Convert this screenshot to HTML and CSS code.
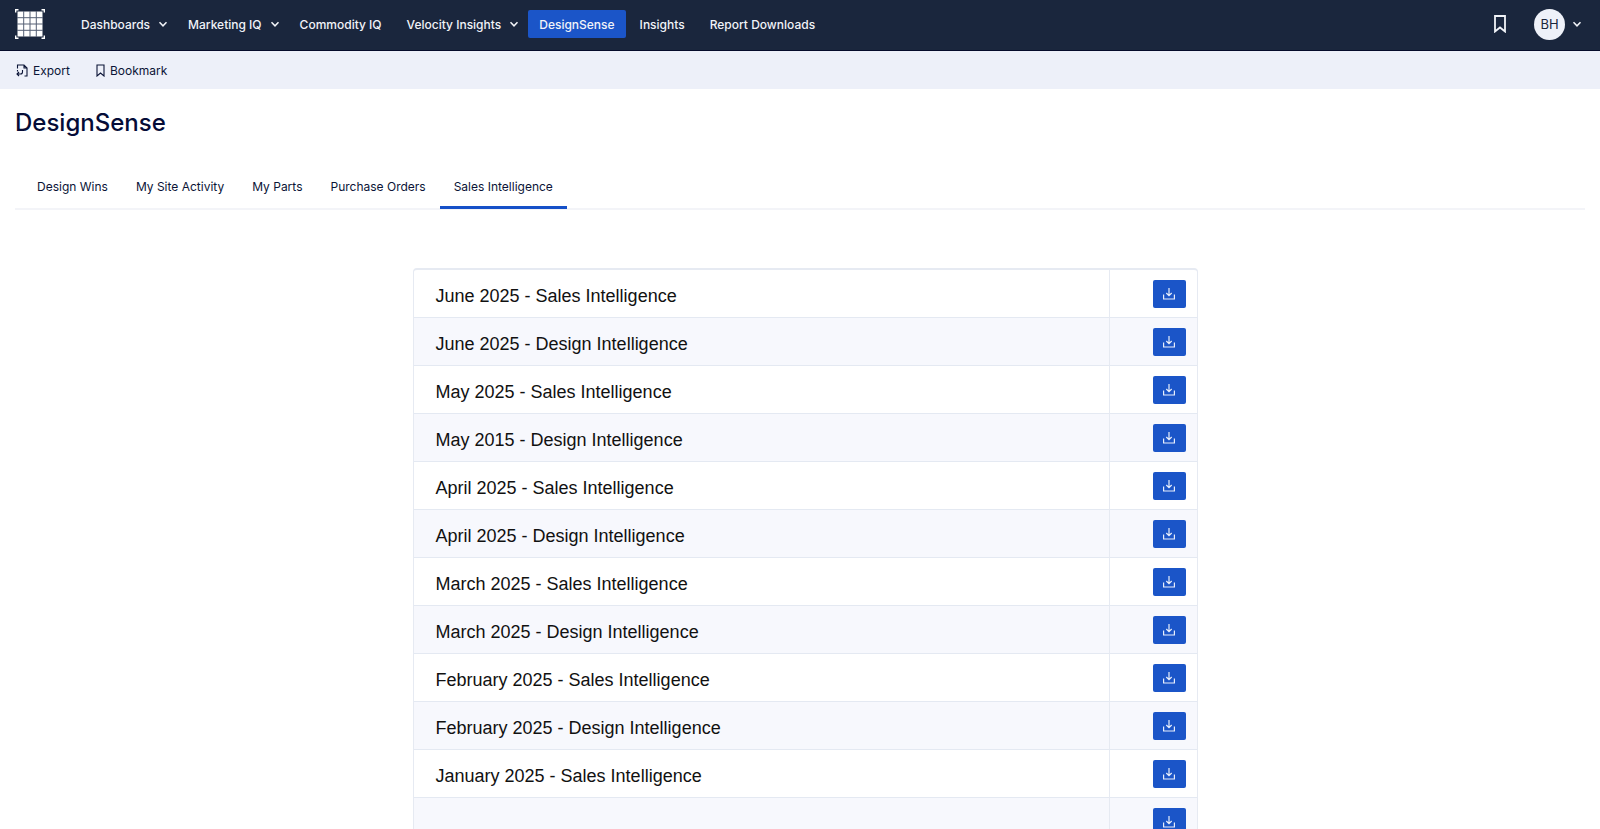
FILE: index.html
```html
<!DOCTYPE html>
<html lang="en">
<head>
<meta charset="utf-8">
<title>DesignSense</title>
<link rel="stylesheet" href="styles.css">
</head>
<body>
<svg class="sprite" aria-hidden="true">
  <symbol id="chevron" viewBox="0 0 10 10"><path d="M1.5 3.2 5 6.8 8.5 3.2" fill="none" stroke="currentColor" stroke-width="1.5"/></symbol>
  <symbol id="bookmark" viewBox="0 0 12 18"><path d="M1 1h10v15.5l-5-4-5 4z" fill="none" stroke="currentColor" stroke-width="1.8"/></symbol>
  <symbol id="download" viewBox="0 0 12 12"><path d="M6 0v7.500M3.300 5 6 7.600 8.700 5M.6 6.500v4.500h10.800V6.500" fill="none" stroke="currentColor" stroke-width="1.200"/></symbol>
</svg>
<header class="topbar">
  <a class="logo" href="#" aria-label="Home">
    <svg width="30" height="30" viewBox="0 0 30 30">
      <path d="M.7 3.500V.7h2.800M26.500.7h2.800v2.800M29.300 26.500v2.800h-2.800M3.500 29.300H.7v-2.800" fill="none" stroke="#fff" stroke-width="1.400"/>
      <path d="M2.500 2.500h25v25h-25z" fill="#fff"/>
      <path d="M8.700 2v26M15 2v26M21.300 2v26M2 8.700h26M2 15h26M2 21.300h26" stroke="#566075" stroke-width="1"/>
    </svg>
  </a>
  <nav class="nav">
    <button class="nav-item has-menu">Dashboards<svg class="chevron"><use href="#chevron"/></svg></button>
    <button class="nav-item has-menu">Marketing IQ<svg class="chevron"><use href="#chevron"/></svg></button>
    <a class="nav-item" href="#">Commodity IQ</a>
    <button class="nav-item has-menu">Velocity Insights<svg class="chevron"><use href="#chevron"/></svg></button>
    <a class="nav-item active" href="#">DesignSense</a>
    <a class="nav-item" href="#">Insights</a>
    <a class="nav-item" href="#">Report Downloads</a>
  </nav>
  <div class="account">
    <button class="plain" aria-label="Bookmarks"><svg class="saved"><use href="#bookmark"/></svg></button>
    <button class="plain user"><span class="avatar">BH</span><svg class="chevron"><use href="#chevron"/></svg></button>
  </div>
</header>
<div class="toolbar">
  <button class="tool"><svg width="12" height="13" viewBox="0 0 12 13" fill="none" stroke="currentColor" stroke-width="1.100"><path d="M1.500 4.500V1H8l3 3v8H8.500M8 1v3h3M1.500 6v1.500M6.500 6v2a2 2 0 0 1-2 2H1M3 8l-2 2 2 2"/></svg>Export</button>
  <button class="tool"><svg width="9" height="13" viewBox="0 0 9 13" fill="none" stroke="currentColor" stroke-width="1.100"><path d="M1 1h7v11L4.500 9 1 12z"/></svg>Bookmark</button>
</div>
<main class="page">
  <h1 class="title">DesignSense</h1>
  <nav class="tabs">
    <a class="tab" href="#">Design Wins</a>
    <a class="tab" href="#">My Site Activity</a>
    <a class="tab" href="#">My Parts</a>
    <a class="tab" href="#">Purchase Orders</a>
    <a class="tab selected" href="#">Sales Intelligence</a>
  </nav>
  <div class="reports-wrap">
    <table class="reports">
      <tbody>
        <tr><td>June 2025 - Sales Intelligence</td><td><button class="download" aria-label="Download"><svg><use href="#download"/></svg></button></td></tr>
        <tr><td>June 2025 - Design Intelligence</td><td><button class="download" aria-label="Download"><svg><use href="#download"/></svg></button></td></tr>
        <tr><td>May 2025 - Sales Intelligence</td><td><button class="download" aria-label="Download"><svg><use href="#download"/></svg></button></td></tr>
        <tr><td>May 2015 - Design Intelligence</td><td><button class="download" aria-label="Download"><svg><use href="#download"/></svg></button></td></tr>
        <tr><td>April 2025 - Sales Intelligence</td><td><button class="download" aria-label="Download"><svg><use href="#download"/></svg></button></td></tr>
        <tr><td>April 2025 - Design Intelligence</td><td><button class="download" aria-label="Download"><svg><use href="#download"/></svg></button></td></tr>
        <tr><td>March 2025 - Sales Intelligence</td><td><button class="download" aria-label="Download"><svg><use href="#download"/></svg></button></td></tr>
        <tr><td>March 2025 - Design Intelligence</td><td><button class="download" aria-label="Download"><svg><use href="#download"/></svg></button></td></tr>
        <tr><td>February 2025 - Sales Intelligence</td><td><button class="download" aria-label="Download"><svg><use href="#download"/></svg></button></td></tr>
        <tr><td>February 2025 - Design Intelligence</td><td><button class="download" aria-label="Download"><svg><use href="#download"/></svg></button></td></tr>
        <tr><td>January 2025 - Sales Intelligence</td><td><button class="download" aria-label="Download"><svg><use href="#download"/></svg></button></td></tr>
        <tr><td></td><td><button class="download" aria-label="Download"><svg><use href="#download"/></svg></button></td></tr>
      </tbody>
    </table>
  </div>
</main>
</body>
</html>
```
FILE: styles.css
```css
* { box-sizing: border-box; }
html { scrollbar-width: none; }
body {
  margin: 0;
  font-family: Inter, "Liberation Sans", sans-serif;
  font-size: 12px;
  color: #0b1437;
  background: #fff;
}
button { font: inherit; color: inherit; background: none; border: 0; padding: 0; cursor: pointer; }
a { color: inherit; text-decoration: none; }
svg { display: block; }
.sprite { display: none; }

.topbar {
  display: flex;
  align-items: center;
  height: 51px;
  padding: 0 18px 2px 15px;
  background: #1a263d;
  color: #f1f3f8;
  border-bottom: 1px solid #050c2b;
}
.logo { margin-right: 25px; }
.nav { display: flex; gap: 3px; }
.nav-item {
  display: flex;
  align-items: center;
  gap: 8px;
  height: 28px;
  padding: 0 11px;
  border-radius: 2px;
  font-weight: 500;
  white-space: nowrap;
}
.nav-item.has-menu { padding-right: 6px; }
.nav-item.active { background: #1b55c8; }
.chevron { width: 10px; height: 10px; }
.account { display: flex; align-items: center; gap: 28px; margin-left: auto; }
.saved { width: 12px; height: 18px; }
.user { display: flex; align-items: center; gap: 7px; }
.avatar {
  display: grid;
  place-items: center;
  width: 31px;
  height: 31px;
  border-radius: 50%;
  background: #eef1f9;
  color: #1a263d;
  font-size: 13px;
}

.toolbar {
  display: flex;
  gap: 26px;
  height: 38px;
  padding: 0 16px;
  background: #edf0f9;
}
.tool { display: flex; align-items: center; gap: 5px; }

.page { padding: 16px 15px 0; }
.title { margin: 0; font-size: 24px; line-height: 36px; font-weight: 500; color: #050c37; }
.tabs {
  display: flex;
  margin-top: 25px;
  padding-left: 8px;
  border-bottom: 2px solid #f3f4f8;
}
.tab { padding: 13px 14px 11px; line-height: 16px; border-bottom: 3px solid transparent; margin-bottom: -1px; }
.tab.selected { border-bottom-color: #1550c8; }

.reports-wrap { padding: 58px 0 0 10px; }
.reports {
  width: calc(50% + 5px);
  margin: 0 auto;
  border: 1px solid #e6eaf2;
  border-top-width: 2px;
  border-radius: 4px 4px 0 0;
  border-spacing: 0;
  font-family: "Liberation Sans", Arial, sans-serif;
  font-size: 18px;
  line-height: 20px;
  color: #111;
}
.reports td { height: 48px; padding: 4px 22px 0; border-bottom: 1px solid #e4e9f2; }
.reports td:last-child { width: 88px; padding: 0 11px 0 0; border-left: 1px solid #e6eaf2; }
.reports tr:nth-child(even) { background: #f7f8fd; }
.download {
  display: grid;
  place-items: center;
  width: 33px;
  height: 28px;
  margin-left: auto;
  border-radius: 2px;
  background: #1b55c8;
  color: #e8eefb;
}
.download svg { width: 12px; height: 12px; }
```
